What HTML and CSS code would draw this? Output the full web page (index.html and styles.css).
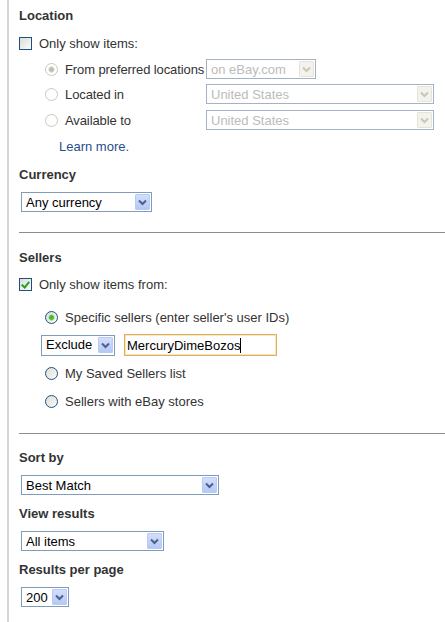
FILE: index.html
```html
<!DOCTYPE html>
<html lang="en">
<head>
    <meta charset="UTF-8">
    <meta name="viewport" content="width=device-width, initial-scale=1.0">
    <title>Search preferences</title>
    <link rel="stylesheet" href="styles.css">
</head>
<body>
    <div class="panel">
        <!-- Location -->
        <div class="heading">Location</div>
        <label class="row check-row first">
            <input type="checkbox" class="box">
            <span>Only show items:</span>
        </label>
        <div class="choices">
            <label class="choice">
                <input type="radio" class="radio" name="loc" checked disabled>
                <span>From preferred locations</span>
            </label>
            <span class="select disabled w-site">
                <select disabled><option>on eBay.com</option></select>
                <span class="arrow"><svg width="15" height="16" viewBox="0 0 15 16"><path d="M4 6.5 L7.5 10 L11 6.5" fill="none" stroke="currentColor" stroke-width="2"/></svg></span>
            </span>

            <label class="choice">
                <input type="radio" class="radio" name="loc" disabled>
                <span>Located in</span>
            </label>
            <span class="select disabled w-country">
                <select disabled><option>United States</option></select>
                <span class="arrow"><svg width="15" height="16" viewBox="0 0 15 16"><path d="M4 6.5 L7.5 10 L11 6.5" fill="none" stroke="currentColor" stroke-width="2"/></svg></span>
            </span>

            <label class="choice lower">
                <input type="radio" class="radio" name="loc" disabled>
                <span>Available to</span>
            </label>
            <span class="select disabled w-country lower">
                <select disabled><option>United States</option></select>
                <span class="arrow"><svg width="15" height="16" viewBox="0 0 15 16"><path d="M4 6.5 L7.5 10 L11 6.5" fill="none" stroke="currentColor" stroke-width="2"/></svg></span>
            </span>
        </div>
        <div class="row learn"><a href="#">Learn more.</a></div>

        <div class="heading spaced">Currency</div>
        <div class="field">
            <span class="select w-currency">
                <select><option>Any currency</option></select>
                <span class="arrow"><svg width="15" height="16" viewBox="0 0 15 16"><path d="M4 6.5 L7.5 10 L11 6.5" fill="none" stroke="currentColor" stroke-width="2"/></svg></span>
            </span>
        </div>

        <hr class="rule rule-top">

        <!-- Sellers -->
        <div class="heading sellers">Sellers</div>
        <label class="row check-row">
            <input type="checkbox" class="box" checked>
            <span>Only show items from:</span>
        </label>
        <label class="row radio-row specific">
            <input type="radio" class="radio" name="seller" checked>
            <span>Specific sellers (enter seller's user IDs)</span>
        </label>
        <div class="row id-row">
            <span class="select w-exclude">
                <select><option>Exclude</option><option>Include</option></select>
                <span class="arrow"><svg width="15" height="16" viewBox="0 0 15 16"><path d="M4 6.5 L7.5 10 L11 6.5" fill="none" stroke="currentColor" stroke-width="2"/></svg></span>
            </span>
            <div class="textbox">MercuryDimeBozos<span class="caret"></span></div>
        </div>
        <label class="row radio-row saved">
            <input type="radio" class="radio" name="seller">
            <span>My Saved Sellers list</span>
        </label>
        <label class="row radio-row stores">
            <input type="radio" class="radio" name="seller">
            <span>Sellers with eBay stores</span>
        </label>

        <hr class="rule rule-bottom">

        <!-- Display -->
        <div class="heading sort">Sort by</div>
        <div class="field">
            <span class="select w-sort">
                <select><option>Best Match</option></select>
                <span class="arrow"><svg width="15" height="16" viewBox="0 0 15 16"><path d="M4 6.5 L7.5 10 L11 6.5" fill="none" stroke="currentColor" stroke-width="2"/></svg></span>
            </span>
        </div>
        <div class="heading spaced">View results</div>
        <div class="field">
            <span class="select w-view">
                <select><option>All items</option></select>
                <span class="arrow"><svg width="15" height="16" viewBox="0 0 15 16"><path d="M4 6.5 L7.5 10 L11 6.5" fill="none" stroke="currentColor" stroke-width="2"/></svg></span>
            </span>
        </div>
        <div class="heading spaced">Results per page</div>
        <div class="field">
            <span class="select w-per-page">
                <select><option>200</option></select>
                <span class="arrow"><svg width="15" height="16" viewBox="0 0 15 16"><path d="M4 6.5 L7.5 10 L11 6.5" fill="none" stroke="currentColor" stroke-width="2"/></svg></span>
            </span>
        </div>
    </div>
</body>
</html>
```

FILE: styles.css
```css
body {
    margin: 0;
    background-color: #fff;
    color: #333;
    font-family: Arial, "Liberation Sans", sans-serif;
    font-size: 13px;
}
.panel {
    margin-left: 7px;
    padding: 6px 0 0 10px;
    min-height: 622px;
    box-sizing: border-box;
    border-left: 2px solid #d6d6d6;
}
.heading {
    height: 17px;
    padding-top: 1px;
    line-height: 18px;
    font-weight: bold;
}
.heading.spaced {
    margin-top: 9px;
}
.row {
    display: flex;
    align-items: center;
    height: 20px;
}
.check-row {
    gap: 7px;
    margin-top: 8px;
}
.check-row.first {
    margin-top: 9px;
}

/* radio list with selects in a second column */
.choices {
    display: grid;
    grid-template-columns: 161px auto;
    row-gap: 5px;
    align-items: center;
    margin-top: 6px;
    padding-left: 26px;
}
.choices .select {
    justify-self: start;
}
.choices .lower {
    margin-top: 1px;
}
.choice {
    display: flex;
    align-items: center;
    gap: 7px;
    height: 20px;
    white-space: nowrap;
    letter-spacing: -0.1px;
}
.learn {
    margin-top: 6px;
    padding-left: 40px;
}
.learn a {
    color: #1f4f8c;
    text-decoration: none;
}
.field {
    margin-top: 9px;
    padding-left: 2px;
    height: 20px;
}

.rule {
    height: 0;
    margin: 0;
    border: 0;
    border-top: 1px solid #8c8c8c;
}
.rule-top {
    margin-top: 20px;
}
.rule-bottom {
    margin-top: 22px;
}
.sellers {
    margin-top: 15px;
}
.sort {
    margin-top: 14px;
}

.radio-row {
    gap: 7px;
    padding-left: 26px;
}
.specific {
    margin-top: 13px;
}
.saved {
    margin-top: 7px;
}
.stores {
    margin-top: 8px;
}
.id-row {
    height: 22px;
    gap: 9px;
    margin-top: 7px;
    padding-left: 22px;
}

/* checkbox */
.box {
    appearance: none;
    position: relative;
    width: 13px;
    height: 13px;
    margin: 0;
    flex: none;
    border: 1px solid #1c5180;
    background: linear-gradient(135deg, #dcdcd7, #fbfbf9);
    box-sizing: border-box;
}
.box:checked::after {
    content: "";
    position: absolute;
    left: 3px;
    top: 1px;
    width: 3px;
    height: 6px;
    border: solid #21a121;
    border-width: 0 2px 2px 0;
    transform: rotate(40deg);
}

/* radio */
.radio {
    appearance: none;
    width: 13px;
    height: 13px;
    margin: 0;
    flex: none;
    border-radius: 50%;
    border: 1px solid #1c5180;
    background: linear-gradient(135deg, #dcdcd7, #fbfbf9);
    box-sizing: border-box;
}
.radio:checked {
    background: radial-gradient(circle, #3fae29 0, #5bbd44 2px, #b5e2a8 3px, transparent 3.5px),
                linear-gradient(135deg, #dcdcd7, #fbfbf9);
}
.radio:disabled {
    border-color: #cac8bb;
    background: #fff;
}
.radio:disabled:checked {
    background: radial-gradient(circle, #b8b6aa 0, #c6c4b8 2px, #e4e3dc 3px, transparent 3.5px), #fff;
}

/* dropdowns */
.select {
    position: relative;
    display: inline-block;
    height: 20px;
    box-sizing: border-box;
    border: 1px solid #7f9db9;
    background: #fff;
}
.select select {
    appearance: none;
    width: 100%;
    height: 18px;
    margin: 0;
    padding: 0 18px 0 4px;
    border: 0;
    background: transparent;
    color: #000;
    font: 13px Arial, "Liberation Sans", sans-serif;
    outline: none;
}
.select .arrow {
    position: absolute;
    top: 1px;
    right: 1px;
    width: 15px;
    height: 16px;
    box-sizing: border-box;
    border: 1px solid #b9cbf5;
    border-radius: 1px;
    background: linear-gradient(#d2defc, #b5c8f7);
    color: #4d6185;
    pointer-events: none;
}
.select .arrow svg {
    display: block;
    margin: -1px 0 0 -1px;
}
.select.disabled {
    border-color: #a3b2c5;
}
.select.disabled select {
    color: #a0a0a0;
}
.select.disabled .arrow {
    border-color: #e6e4da;
    background: #f3f2ec;
    color: #c9c7b9;
}

.w-site { width: 110px; }
.w-country { width: 228px; }
.w-currency { width: 131px; }
.w-exclude { width: 74px; height: 21px; }
.w-sort { width: 198px; }
.w-view { width: 143px; }
.w-per-page { width: 48px; }

/* seller id field with focus highlight */
.textbox {
    display: flex;
    align-items: center;
    width: 153px;
    height: 22px;
    box-sizing: border-box;
    padding-left: 2px;
    border: 1px solid #dfae5a;
    box-shadow: inset 0 0 0 1px #f8e6c0;
    color: #000;
}
.caret {
    width: 1px;
    height: 15px;
    background: #000;
}
```
